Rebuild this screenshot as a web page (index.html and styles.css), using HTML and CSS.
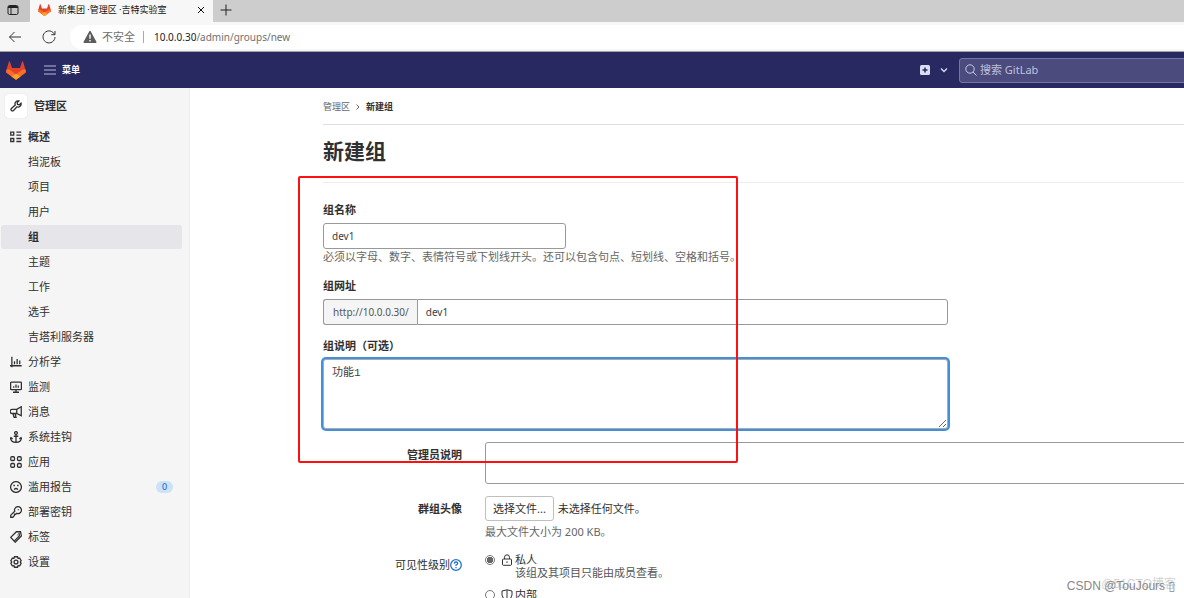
FILE: index.html
```html
<!DOCTYPE html>
<html lang="zh-CN">
<head>
<meta charset="utf-8">
<meta name="viewport" content="width=device-width, initial-scale=1">
<title>新集团 ·管理区 ·吉特实验室</title>
<link rel="stylesheet" href="styles.css">
</head>
<body>
<svg class="defs" aria-hidden="true">
  <symbol id="tanuki" viewBox="0 0 24 22">
    <path fill="#e24329" d="M4.100 0q.4 0 .6.6L7.300 8h9.400L19.300.6q.2-.6.6-.6t.6.6L23.900 12q.2 1-.6 1.700L12 22 .7 13.700Q-.1 13 .1 12L3.500.6q.2-.6.6-.6z"/>
    <path fill="#fc6d26" d="M1 9.500q4 0 6.300 2.800L12 15.500l4.700-3.200Q19 9.500 23 9.500l.9 2.500q.2 1-.6 1.700L12 22 .7 13.700Q-.1 13 .1 12z"/>
    <path fill="#fca326" d="m12 14.800-5.400 3.300L12 22l5.400-3.900z"/>
  </symbol>
</svg>
<div class="app">
  <header class="browser">
    <div class="tabs">
      <button class="tab-menu" aria-label="标签页操作"><svg viewBox="0 0 12 12" class="i12 line"><rect x="1" y="1.500" width="10" height="9" rx="1.500"/><path d="M1 3.500h10M1.500 2.500h9M4 4v6"/></svg></button>
      <div class="tab">
        <svg class="favicon"><use href="#tanuki"/></svg>
        <span class="tab-title">新集团 ·管理区 ·吉特实验室</span>
        <button aria-label="关闭"><svg viewBox="0 0 12 12" class="i12 line"><path d="m3 3 6 6m0-6-6 6"/></svg></button>
      </div>
      <button class="tab-new" aria-label="新标签页"><svg viewBox="0 0 12 12" class="i12 line"><path d="M6 .5v11M.5 6h11"/></svg></button>
    </div>
    <div class="toolbar">
      <button aria-label="返回"><svg viewBox="0 0 14 14" class="i14 line"><path d="M13 7H1.500M6.500 2l-5 5 5 5"/></svg></button>
      <button aria-label="刷新"><svg viewBox="0 0 14 14" class="i14 line"><path d="M12.500 4.500A6 6 0 1 0 13 7M13 1v3.700H9.300"/></svg></button>
      <div class="address">
        <svg viewBox="0 0 14 14" class="i14"><path fill="#5c5c5c" d="M7 .8q.5 0 .8.6l5.600 10.400q.5 1.200-.8 1.200H1.400Q.1 13 .6 11.800L6.200 1.400Q6.500.8 7 .8z"/><path stroke="#fff" stroke-width="1.400" d="M7 4.500v4.200M7 10v1.400"/></svg>
        <span class="insecure">不安全</span>
        <span class="url"><b>10.0.0.30</b>/admin/groups/new</span>
      </div>
    </div>
  </header>

  <nav class="topnav">
    <a class="brand" href="#" aria-label="GitLab"><svg><use href="#tanuki"/></svg></a>
    <button class="menu"><svg viewBox="0 0 12 12" class="i12 line"><path d="M0 2h12M0 6h12M0 10h12"/></svg>菜单</button>
    <button class="create" aria-label="新建">
      <svg viewBox="0 0 10 10" class="i10"><rect width="10" height="10" rx="1.500" fill="#dcdcf4"/><path stroke="#292961" stroke-width="1.500" d="M5 2.500v5M2.500 5h5"/></svg>
      <svg viewBox="0 0 8 8" class="i8"><path fill="none" stroke="#dcdcf4" stroke-width="1.300" d="m1 2.500 3 3 3-3"/></svg>
    </button>
    <label class="search"><svg viewBox="0 0 12 12" class="i12 line"><circle cx="5" cy="5" r="4.200"/><path d="m8 8 3.500 3.500"/></svg><input type="search" placeholder="搜索 GitLab" aria-label="搜索 GitLab"></label>
  </nav>

  <div class="body">
    <aside class="sidebar">
      <a class="context" href="#"><span class="context-icon"><svg viewBox="0 0 16 16" class="i12 line"><path d="M14.700 4.200A4 4 0 0 1 9.300 9L4.700 14a1.900 1.900 0 0 1-2.800-2.700L7 6.700A4 4 0 0 1 11.800 1.300L9.600 3.500l.4 2.400 2.500.4z"/></svg></span>管理区</a>
      <ul>
        <li><a class="strong" href="#"><svg viewBox="0 0 16 16" class="i12 line"><path d="M1 1.500h4v4H1zM1 10h4v4H1zM8.500 1.500H15M8.500 5.500H15M8.500 10H15M8.500 14H15"/></svg>概述</a></li>
        <li><a class="sub" href="#">挡泥板</a></li>
        <li><a class="sub" href="#">项目</a></li>
        <li><a class="sub" href="#">用户</a></li>
        <li><a class="sub strong active" href="#">组</a></li>
        <li><a class="sub" href="#">主题</a></li>
        <li><a class="sub" href="#">工作</a></li>
        <li><a class="sub" href="#">选手</a></li>
        <li><a class="sub" href="#">吉塔利服务器</a></li>
        <li><a href="#"><svg viewBox="0 0 16 16" class="i12 line"><path d="M2.500 1v14M0 13h15.500M6 11V7M9.500 11V4M13 11V6"/></svg>分析学</a></li>
        <li><a href="#"><svg viewBox="0 0 16 16" class="i12 line"><rect x=".8" y="1.500" width="14.400" height="10" rx="1"/><path d="M8 12v3M4 15h8M5 9V7M8 9V4.500M11 9V6"/></svg>监测</a></li>
        <li><a href="#"><svg viewBox="0 0 16 16" class="i12 line"><path d="M15 1v12L9 10H3a2.500 2.500 0 0 1 0-5.500h6zM9 4.500V10M4 10l1.500 5H8L7 10"/></svg>消息</a></li>
        <li><a href="#"><svg viewBox="0 0 16 16" class="i12 line"><circle cx="8" cy="2.700" r="1.900"/><path d="M8 4.600V15M5 7h6M1 9.500C1 13 4 15 8 15s7-2 7-5.500M0 11l1.300-2L3.500 10.500M16 11l-1.300-2-2.200 1.500"/></svg>系统挂钩</a></li>
        <li><a href="#"><svg viewBox="0 0 16 16" class="i12 line"><rect x="1" y="1" width="5" height="5" rx="1.500"/><rect x="10" y="1" width="5" height="5" rx="1.500"/><rect x="1" y="10" width="5" height="5" rx="1.500"/><rect x="10" y="10" width="5" height="5" rx="1.500"/></svg>应用</a></li>
        <li><a href="#"><svg viewBox="0 0 16 16" class="i12 line"><circle cx="8" cy="8" r="7.200"/><path d="M4.500 6h2M9.500 6h2M5.500 11.500q2.500-3 5 0"/></svg>滥用报告<span class="badge">0</span></a></li>
        <li><a href="#"><svg viewBox="0 0 16 16" class="i12 line"><path d="M6.300 7A4.600 4.600 0 1 1 9 9.800L7.500 11H6v1.500L3.800 15H1v-2.800zM10.500 5.500l1-1"/></svg>部署密钥</a></li>
        <li><a href="#"><svg viewBox="0 0 16 16" class="i12 line"><path d="M8.500 1H14l1.200 5.500L7 15 1 8.500zM12 2.500l.5 4-7 7M10 5v.5"/></svg>标签</a></li>
        <li><a href="#"><svg viewBox="0 0 16 16" class="i12 line"><path d="M6 1h4l.7 2 2.200-.2 2 3.400L13.700 8l1.200 1.800-2 3.400-2.200-.2L10 15H6l-.7-2-2.200.2-2-3.400L2.300 8 1.100 6.200l2-3.400 2.200.2z"/><circle cx="8" cy="8" r="2.600"/></svg>设置</a></li>
      </ul>
    </aside>

    <main class="content">
      <nav class="crumbs" aria-label="面包屑"><a href="#">管理区</a><svg viewBox="0 0 6 6" class="i6 line"><path d="m1.500.5 2.500 2.500-2.500 2.500"/></svg><strong>新建组</strong></nav>
      <h1>新建组</h1>
      <form>
        <div class="field">
          <label for="name">组名称</label>
          <input class="control short" id="name" type="text" value="dev1">
          <p class="hint">必须以字母、数字、表情符号或下划线开头。还可以包含句点、短划线、空格和括号。</p>
        </div>
        <div class="field">
          <label for="path">组网址</label>
          <div class="group"><span class="prefix">http://10.0.0.30/</span><input class="control" id="path" type="text" value="dev1"></div>
        </div>
        <div class="field">
          <label for="desc">组说明（可选）</label>
          <textarea class="control focused" id="desc">功能1</textarea>
        </div>
        <div class="row admin">
          <label for="note">管理员说明</label>
          <textarea class="control note" id="note"></textarea>
        </div>
        <div class="row avatar">
          <label for="avatar">群组头像</label>
          <div>
            <div class="picker"><button type="button" id="avatar" class="file">选择文件...</button><span>未选择任何文件。</span></div>
            <p class="hint">最大文件大小为 200 KB。</p>
          </div>
        </div>
        <div class="row visibility">
          <span class="legend" id="vis">可见性级别<svg viewBox="0 0 12 12" class="i12 help"><circle cx="6" cy="6" r="5.300"/><path d="M4.300 4.800Q4.300 3 6 3t1.700 1.500Q7.700 5.500 6 6v1M6 8v1.200"/></svg></span>
          <div role="radiogroup" aria-labelledby="vis">
            <div class="option">
              <input type="radio" name="v" id="private" checked>
              <label for="private"><svg viewBox="0 0 12 12" class="i12 line"><rect x="1.500" y="5" width="9" height="6.300" rx="1"/><path d="M3.500 5V3.300a2.500 2.500 0 0 1 5 0V5M6 7.300v1.700"/></svg>私人</label>
              <p>该组及其项目只能由成员查看。</p>
            </div>
            <div class="option">
              <input type="radio" name="v" id="internal">
              <label for="internal"><svg viewBox="0 0 12 12" class="i12 line"><path d="M6 .8 11 2v4q0 3.500-5 5.300Q1 9.500 1 6V2zM6 1v10"/></svg>内部</label>
            </div>
          </div>
        </div>
      </form>
      <div class="highlight"></div>
    </main>
  </div>
  <div class="mark mark-back">@51CTO博客</div>
  <div class="mark">CSDN @TouJours ▯</div>
</div>
</body>
</html>
```

FILE: styles.css
```css
* { box-sizing: border-box; }
body, h1, p, ul { margin: 0; padding: 0; }
body, button, input {
  font-family: "Noto Sans", "Noto Sans CJK SC", sans-serif;
  font-size: 11px;
  line-height: 16px;
}
body { color: #303030; background: #fff; }
button { border: 0; padding: 0; background: none; color: inherit; display: flex; align-items: center; }
a { color: inherit; text-decoration: none; }
ul { list-style: none; }
svg { flex: none; }
.defs { position: absolute; width: 0; height: 0; }
.line { fill: none; stroke: currentColor; stroke-width: 1; }
.i6 { width: 6px; height: 6px; }
.i8 { width: 8px; height: 8px; }
.i10 { width: 10px; height: 10px; }
.i12 { width: 12px; height: 12px; }
.i14 { width: 14px; height: 14px; }
.app { position: relative; height: 100vh; overflow: hidden; display: flex; flex-direction: column; }

.browser { flex: none; background: #f7f7f7; border-bottom: 1px solid #a0a0a0; }
.tabs { display: flex; height: 22px; background: #cdcdcd; color: #222; }
.tab-menu { width: 30px; padding-left: 7px; padding-bottom: 2px; border-radius: 0 0 4px 0; background: #c6c6c6; }
.tab { display: flex; align-items: center; width: 183px; padding: 0 6px 2px 8px; background: #f7f7f7; font-size: 9px; color: #111; }
.favicon { width: 13px; height: 12px; margin-right: 7px; }
.tab-title { flex: 1; white-space: nowrap; }
.tab-new { padding: 0 7px 2px; }
.toolbar { display: flex; align-items: center; gap: 20px; height: 29px; padding-left: 8px; color: #333; }
.address { flex: 1; display: flex; align-items: center; height: 24px; margin-left: -6px; padding-left: 13px; border-radius: 12px 0 0 12px; background: #fff; color: #707070; }
.insecure { margin-left: 5px; padding-right: 8px; border-right: 1px solid #aaa; line-height: 12px; }
.url { margin-left: 10px; font-size: 10px; }
.url b { font-weight: 400; color: #222; }

.topnav { flex: none; display: flex; align-items: center; height: 36px; padding-left: 6px; background: #292961; color: #dcdcf4; }
.brand svg { display: block; width: 20px; height: 19px; }
.menu { gap: 6px; margin-left: 18px; font-size: 9px; font-weight: 700; color: #fff; }
.menu svg { color: #b9b9dc; }
.create { gap: 10px; margin-left: auto; margin-right: 11px; }
.search { display: flex; align-items: center; gap: 3px; width: 233px; height: 25px; margin-right: -8px; padding-left: 5px; border: 1px solid #7474a6; border-radius: 3px; background: #4b4b7d; color: #c9c9e6; }
.search input { flex: 1; min-width: 0; border: 0; padding: 0; background: none; color: inherit; outline: 0; }
.search input::placeholder { color: #c0c0dc; opacity: 1; }

.body { flex: 1; display: flex; min-height: 0; }
.sidebar { flex: none; width: 190px; padding: 6px 7px 0 1px; background: #f5f5f5; border-right: 1px solid #ececec; }
.context { display: flex; align-items: center; gap: 7px; margin: 0 0 7px 4px; font-weight: 700; color: #303030; }
.context-icon { display: grid; place-items: center; width: 22px; height: 24px; border-radius: 3px; background: #fff; box-shadow: 0 0 1px #bbb; }
.sidebar li { height: 25px; }
.sidebar li a { display: flex; align-items: center; gap: 6px; height: 24px; padding: 0 9px; border-radius: 3px; }
.sidebar .line { stroke-width: 1.7; }
.sidebar li a.sub { padding-left: 27px; }
.strong { font-weight: 700; }
.sidebar li a.active { background: #e5e5ea; }
.badge { margin-left: auto; width: 17px; height: 12px; border-radius: 6px; background: #cbe2f9; color: #1068bf; font-size: 9px; line-height: 12px; text-align: center; }

.content { position: relative; flex: 1; min-width: 0; padding-left: 133px; }
.crumbs { display: flex; align-items: center; gap: 5px; height: 37px; padding-top: 1px; border-bottom: 1px solid #dedede; font-size: 9px; color: #666; }
.crumbs strong { color: #303030; }
h1 { height: 58px; border-bottom: 1px solid #eee; font-size: 21px; line-height: 52px; color: #303030; }
form { padding-top: 19px; }
.field { width: 625px; max-width: 100%; margin-bottom: 13px; }
.field > label { display: block; margin-bottom: 5px; font-weight: 700; }
.control { display: block; width: 100%; height: 26px; padding: 0 8px; border: 1px solid #999; border-radius: 3px; background: #fff; color: #404040; }
input.control { font-size: 10px; }
.short { width: 243px; }
.hint { color: #666; white-space: nowrap; }
.group { display: flex; }
.prefix { flex: none; padding: 4px 8px 4px 9px; border: 1px solid #999; border-right: 0; border-radius: 3px 0 0 3px; background: #f5f5f5; color: #555; font-size: 10px; }
.group .control { flex: 1; min-width: 0; border-radius: 0 3px 3px 0; }
textarea.control { height: 70px; padding: 5px 8px; font: 11px/16px "Liberation Mono", "Noto Sans CJK SC", monospace; outline: 0; }
textarea.focused { border-color: #aaa; box-shadow: 0 0 0 2px #428fdc; }
textarea.note { height: 42px; width: calc(100% + 8px); resize: none; }
.row { display: grid; grid-template-columns: 139px minmax(0, 1fr); column-gap: 23px; }
.row > label, .legend { justify-self: end; font-weight: 700; }
.admin > label { padding-top: 5px; }
.avatar { margin-top: 12px; }
.avatar > label { padding-top: 5px; }
.picker { display: flex; align-items: center; gap: 4px; }
.file { height: 25px; padding: 0 7px; border: 1px solid #bfbfbf; border-radius: 3px; }
.avatar .hint { margin-top: 3px; }
.visibility { margin-top: 12px; }
.legend { display: flex; align-items: center; height: 26px; font-weight: 400; }
.help { fill: none; stroke: #1f75cb; stroke-width: 1.3; }
.option { display: grid; grid-template-columns: 16px 1fr; height: 35px; align-content: start; }
.option input { appearance: none; width: 10px; height: 10px; margin: 3px 0; border: 1px solid #767676; border-radius: 50%; background: #fff; }
.option input:checked { background: radial-gradient(circle, #666 0 3px, #fff 3px); }
.option label { display: flex; align-items: center; gap: 2px; line-height: 14px; }
.option p { grid-column: 2; padding-left: 14px; line-height: 10px; white-space: nowrap; color: #555; }
.highlight { position: absolute; left: 108px; top: 88px; width: 440px; height: 287px; border: 2px solid #ff1010; border-radius: 2px; pointer-events: none; }
.mark { position: absolute; right: 9px; bottom: 4px; font-family: "Liberation Sans", "Noto Sans CJK SC", "DejaVu Sans", sans-serif; font-size: 12px; color: #888; }
.mark-back { right: 8px; bottom: 6px; color: #d2d2d2; }
```
